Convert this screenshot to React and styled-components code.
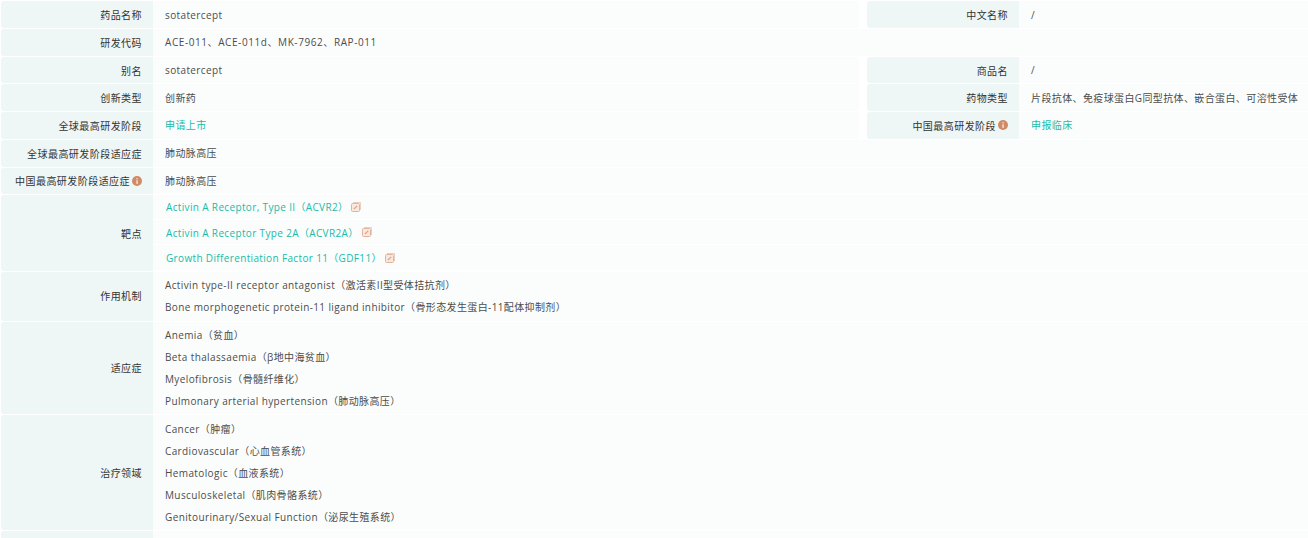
import React from "react";
import styled, { createGlobalStyle } from "styled-components";

const Global = createGlobalStyle`
  html, body { margin: 0; padding: 0; background: #fff; overflow: hidden; }
  body { font-family: "Open Sans", "Noto Sans CJK SC", sans-serif; font-size: 10px; color: #4c4c4c; }
`;
const Table = styled.div`
  width: 1308px;
  height: 538px;
  overflow: hidden;
  padding-top: 1.3px;
  box-sizing: border-box;
  display: flex;
  flex-direction: column;
  gap: 1px;
`;
const Row = styled.div`
  display: flex;
  height: ${(p) => p.$h}px;
  flex: none;
`;
const Label = styled.div`
  flex: none;
  width: 152px;
  margin-left: ${(p) => (p.$second ? "8px" : "1px")};
  box-sizing: border-box;
  padding-right: 11px;
  padding-bottom: ${(p) => (p.$lift ? "1px" : "0")};
  background: #eff6f6;
  border-radius: 3px 0 0 3px;
  display: flex;
  align-items: center;
  justify-content: flex-end;
  gap: 2px;
  color: #333;
  letter-spacing: 0.45px;
`;
const Value = styled.div`
  flex: ${(p) => (p.$half ? "none" : "1")};
  width: ${(p) => (p.$half ? "706px" : "auto")};
  box-sizing: border-box;
  padding-left: 12px;
  background: #fbfdfd;
  display: flex;
  flex-direction: column;
  justify-content: center;
  gap: ${(p) => p.$gap || 0}px;
  letter-spacing: 0.38px;
`;
const Line = styled.div`
  line-height: 14px;
  white-space: nowrap;
  letter-spacing: ${(p) => (p.$wide ? "0.58px" : "inherit")};
`;
const Link = styled.span`
  color: #20bba8;
  display: flex;
  align-items: center;
  gap: 3px;
`;
const TargetList = styled.div`
  flex: 1;
  background: #fbfdfd;
  display: flex;
  flex-direction: column;
  gap: 1px;
  padding-bottom: 0.5px;
`;
const TargetRow = styled.div`
  flex: 1;
  padding-left: 13px;
  display: flex;
  align-items: center;
  letter-spacing: 0.35px;
  border-bottom: 1px solid #fff;
`;
const InfoBadge = () => (
  <svg width="10" height="10" viewBox="0 0 10 10">
    <circle cx="5" cy="5" r="5" fill="#d08a66" />
    <rect x="4.5" y="4.3" width="1.1" height="3.6" fill="#fff" />
    <rect x="4.5" y="2.2" width="1.1" height="1.2" fill="#fff" />
  </svg>
);
const ExtIcon = () => (
  <svg width="10" height="10" viewBox="0 0 10 10" fill="none">
    <path d="M2 .5h7.5V8" stroke="#edcdbb" />
    <rect x="0.5" y="1.5" width="8" height="8" rx="1" fill="#f8e9e0" stroke="#e3b49b" />
    <path d="M2.8 7.2 6.2 3.8" stroke="#d9a283" strokeWidth="1.2" />
  </svg>
);

const Two = ({ a, b, c, d, h, link, ai }) => (
  <Row $h={h}>
    <Label>{a}</Label>
    <Value $half>
      <Line>{link ? <Link>{b}</Link> : b}</Line>
    </Value>
    <Label $second>
      {c}
      {ai && <InfoBadge />}
    </Label>
    <Value>
      <Line>{link ? <Link>{d}</Link> : d}</Line>
    </Value>
  </Row>
);
const One = ({ a, lines, h, gap, info, wide, lift }) => (
  <Row $h={h}>
    <Label $lift={lift}>
      {a}
      {info && <InfoBadge />}
    </Label>
    <Value $gap={gap}>
      {lines.map((l) => (
        <Line key={l} $wide={wide}>{l}</Line>
      ))}
    </Value>
  </Row>
);

const H = 26.71;

export default function App() {
  return (
    <>
      <Global />
      <Table>
        <Two h={H} a="药品名称" b="sotatercept" c="中文名称" d="/" />
        <One h={H} wide a="研发代码" lines={["ACE-011、ACE-011d、MK-7962、RAP-011"]} />
        <Two h={H} a="别名" b="sotatercept" c="商品名" d="/" />
        <Two h={H} a="创新类型" b="创新药" c="药物类型" d="片段抗体、免疫球蛋白G同型抗体、嵌合蛋白、可溶性受体" />
        <Two h={H} link a="全球最高研发阶段" b="申请上市" c="中国最高研发阶段" ai d="申报临床" />
        <One h={H} a="全球最高研发阶段适应症" lines={["肺动脉高压"]} />
        <One h={H} a="中国最高研发阶段适应症" info lines={["肺动脉高压"]} />
        <Row $h={76}>
          <Label>靶点</Label>
          <TargetList>
            {["Activin A Receptor, Type II（ACVR2）", "Activin A Receptor Type 2A（ACVR2A）", "Growth Differentiation Factor 11（GDF11）"].map((t) => (
              <TargetRow key={t}>
                <Link>
                  {t}
                  <ExtIcon />
                </Link>
              </TargetRow>
            ))}
          </TargetList>
        </Row>
        <One h={48.4} gap={8} lift a="作用机制" lines={["Activin type-II receptor antagonist（激活素II型受体拮抗剂）", "Bone morphogenetic protein-11 ligand inhibitor（骨形态发生蛋白-11配体抑制剂）"]} />
        <One h={92.6} gap={8} a="适应症" lines={["Anemia（贫血）", "Beta thalassaemia（β地中海贫血）", "Myelofibrosis（骨髓纤维化）", "Pulmonary arterial hypertension（肺动脉高压）"]} />
        <One h={115} gap={8} a="治疗领域" lines={["Cancer（肿瘤）", "Cardiovascular（心血管系统）", "Hematologic（血液系统）", "Musculoskeletal（肌肉骨骼系统）", "Genitourinary/Sexual Function（泌尿生殖系统）"]} />
        <One h={40} a="" lines={[]} />
      </Table>
    </>
  );
}
